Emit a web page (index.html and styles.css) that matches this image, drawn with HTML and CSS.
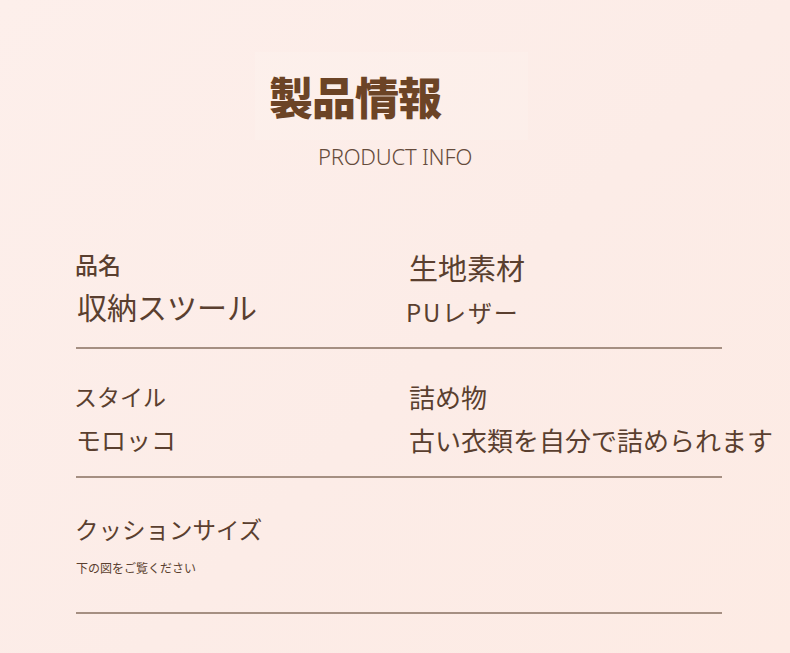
FILE: index.html
```html
<!DOCTYPE html>
<html lang="ja">
<head>
<meta charset="utf-8">
<title>製品情報</title>
<link rel="stylesheet" href="styles.css">
</head>
<body>
<main class="page">
  <header class="head">
    <div class="title-wrap"><h1 class="title">製品情報</h1></div>
    <p class="subtitle">PRODUCT INFO</p>
  </header>
  <section class="specs">
    <div class="row row-1">
      <div class="cell">
        <div class="label l-name">品名</div>
        <div class="value v-name">収納スツール</div>
      </div>
      <div class="cell cell-right">
        <div class="label l-fabric">生地素材</div>
        <div class="value v-fabric">PUレザー</div>
      </div>
    </div>
    <hr class="rule">
    <div class="row row-2">
      <div class="cell">
        <div class="label l-style">スタイル</div>
        <div class="value v-style">モロッコ</div>
      </div>
      <div class="cell cell-right">
        <div class="label l-fill">詰め物</div>
        <div class="value v-fill">古い衣類を自分で詰められます</div>
      </div>
    </div>
    <hr class="rule">
    <div class="row row-3">
      <div class="cell">
        <div class="label l-size">クッションサイズ</div>
        <div class="note">下の図をご覧ください</div>
      </div>
    </div>
    <hr class="rule">
  </section>
</main>
</body>
</html>
```

FILE: styles.css
```css
html, body {
  margin: 0;
  padding: 0;
}
body {
  width: 790px;
  height: 653px;
  overflow: hidden;
  background: linear-gradient(135deg, #fdefeb 0%, #fcece7 55%, #fdebe4 100%);
  font-family: "Noto Sans CJK JP", "Noto Sans", sans-serif;
  color: #5a3f2f;
}
.page {
  display: flex;
  flex-direction: column;
}
.head {
  display: flex;
  flex-direction: column;
  padding-top: 52px;
}
.title-wrap {
  margin-left: 255px;
  width: 273px;
  height: 88px;
  background: rgba(255, 255, 255, 0.12);
  display: flex;
  align-items: center;
}
.title {
  margin: 0 0 0 14px;
  font-size: 44px;
  line-height: 56px;
  font-weight: 900;
  color: #6c4426;
  letter-spacing: -1px;
}
.subtitle {
  margin: 4px 0 0 0;
  text-align: center;
  font-family: "Noto Sans", sans-serif;
  font-weight: 300;
  font-size: 22px;
  line-height: 24px;
  color: #654b3b;
  letter-spacing: -0.2px;
}
.specs {
  display: flex;
  flex-direction: column;
  margin-left: 76px;
  width: 646px;
  padding-top: 79px;
}
.row {
  display: grid;
  grid-template-columns: 332px 1fr;
  align-items: start;
}
.row-1 { padding-bottom: 10px; }
.row-2 { padding-top: 28px; padding-bottom: 13px; }
.row-3 { padding-top: 31px; padding-bottom: 34px; }
.cell {
  display: flex;
  flex-direction: column;
  white-space: nowrap;
}
.label, .value, .note {
  font-weight: 400;
}
.l-name { font-size: 23px; line-height: 34px; font-weight: 500; margin-left: -1px; }
.v-name { font-size: 30px; line-height: 50px; margin-left: 1px; }
.l-fabric { font-size: 29px; line-height: 40px; }
.v-fabric { font-size: 24px; line-height: 50px; margin-left: -3px; letter-spacing: 1.8px; }
.l-style { font-size: 23px; line-height: 38px; margin-left: -2px; }
.v-style { font-size: 25px; line-height: 48px; }
.l-fill { font-size: 26px; line-height: 40px; }
.v-fill { font-size: 26px; line-height: 46px; }
.l-size { font-size: 23.5px; line-height: 40px; margin-left: -1px; }
.note { font-size: 12px; line-height: 20px; margin-top: 9px; }
.cell-right { padding-left: 1px; }
.rule {
  margin: 0;
  border: 0;
  height: 2px;
  background: #a58f82;
}
```
